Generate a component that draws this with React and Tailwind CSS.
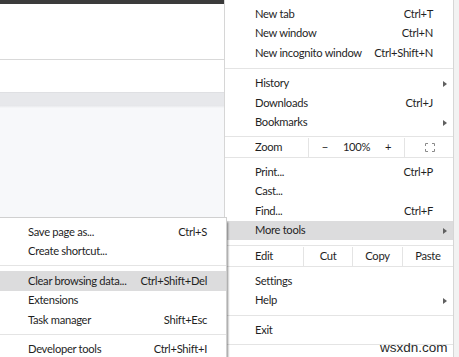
import React from "react";

const Arrow = () => (
  <span className="inline-block w-0 h-0 border-y-[3.5px] border-y-transparent border-l-[4px] border-l-[#606060]" />
);

const Item = ({ label, shortcut, arrow, active }) => (
  <div className={`flex items-center h-[19.5px] pt-[1px] pl-[30px] pr-[4px] whitespace-nowrap ${active ? "bg-[#dcdcdd]" : ""}`}>
    <span className="flex-1">{label}</span>
    {shortcut && <span className="mr-[8px]">{shortcut}</span>}
    <span className="w-[8px] flex justify-center">{arrow && <Arrow />}</span>
  </div>
);

const SubItem = ({ label, shortcut, active }) => (
  <div className={`flex items-center h-[19.5px] pt-[1px] pl-[28px] pr-[19px] whitespace-nowrap ${active ? "bg-[#dcdcdd]" : ""}`}>
    <span className="flex-1">{label}</span>
    {shortcut && <span>{shortcut}</span>}
  </div>
);

const Sep = ({ top = "mt-[5px]", bottom = "mb-[5px]" }) => (
  <div className={`h-px bg-[#e4e4e4] ${top} ${bottom}`} />
);

const FullscreenIcon = () => (
  <svg width="10" height="9" viewBox="0 0 10 9" fill="none" stroke="#8a8a8a" strokeWidth="1">
    <path d="M0.5 3V0.5H3M7 0.5H9.5V3M9.5 6V8.5H7M3 8.5H0.5V6" />
  </svg>
);

export default function App() {
  return (
    <div
      className="relative w-[459px] h-[357px] overflow-hidden flex text-[11.2px] tracking-[-0.3px] text-[#1f1f1f]"
      style={{ fontFamily: "Lato, 'Noto Sans', sans-serif" }}
    >
      {/* page behind the menus */}
      <div className="flex-1 flex flex-col">
        <div className="h-[4px] bg-[#3b3b3b]" />
        <div className="h-[55px] bg-white" />
        <div className="h-px bg-[#d9d9d9]" />
        <div className="h-[32px] bg-white" />
        <div className="h-px bg-[#dfe0e3]" />
        <div className="h-[12px] bg-[#e7e8eb]" />
        <div className="h-[3px] bg-gradient-to-b from-[#e3e4e7] to-[#f6f7f9]" />
        <div className="flex-1 bg-[#f7f8fa]" />
      </div>
      <div className="w-[6px] bg-[#f2f2f2]" />

      {/* main menu */}
      <div className="absolute left-[224px] top-0 w-[230px] h-[370px] bg-white border-x border-[#d6d6d6] pt-[4px]">
        <Item label="New tab" shortcut="Ctrl+T" />
        <Item label="New window" shortcut="Ctrl+N" />
        <Item label="New incognito window" shortcut="Ctrl+Shift+N" />
        <Sep />
        <Item label="History" arrow />
        <Item label="Downloads" shortcut="Ctrl+J" />
        <Item label="Bookmarks" arrow />
        <div className="mt-[4px] flex h-[21.5px] pt-[1px] border-y border-[#e4e4e4]">
          <div className="w-[83px] pl-[30px] flex items-center">Zoom</div>
          <div className="w-[96px] border-l border-[#e4e4e4] grid grid-cols-3 items-center text-center">
            <span>−</span>
            <span>100%</span>
            <span>+</span>
          </div>
          <div className="flex-1 border-l border-[#e4e4e4] flex items-center justify-center pl-[1px]">
            <FullscreenIcon />
          </div>
        </div>
        <div className="mt-[4.5px]">
          <Item label="Print..." shortcut="Ctrl+P" />
          <Item label="Cast..." />
          <Item label="Find..." shortcut="Ctrl+F" />
          <Item label="More tools" arrow active />
        </div>
        <div className="mt-[5px] flex h-[21.5px] pt-[1px] border-y border-[#e4e4e4]">
          <div className="w-[78px] pl-[30px] flex items-center">Edit</div>
          <div className="w-[49px] border-l border-[#e4e4e4] flex items-center justify-center">Cut</div>
          <div className="w-[50px] border-l border-[#e4e4e4] flex items-center justify-center">Copy</div>
          <div className="flex-1 border-l border-[#e4e4e4] flex items-center justify-center">Paste</div>
        </div>
        <div className="mt-[4.5px]">
          <Item label="Settings" />
          <Item label="Help" arrow />
        </div>
        <Sep top="mt-[4.5px]" bottom="mb-[5px]" />
        <Item label="Exit" />
        <Sep top="mt-[4px]" bottom="mb-[4px]" />
      </div>

      {/* more tools submenu */}
      <div className="absolute left-0 top-[217px] w-[227px] h-[150px] bg-white border-t border-r border-[#d0d0d0] pt-[4px] shadow-[2px_4px_2px_-1px_rgba(0,0,0,0.45)]">
        <SubItem label="Save page as..." shortcut="Ctrl+S" />
        <SubItem label="Create shortcut..." />
        <Sep top="mt-[4px]" bottom="mb-[5px]" />
        <SubItem label="Clear browsing data..." shortcut="Ctrl+Shift+Del" active />
        <SubItem label="Extensions" />
        <SubItem label="Task manager" shortcut="Shift+Esc" />
        <Sep top="mt-[4px]" bottom="mb-[4.5px]" />
        <SubItem label="Developer tools" shortcut="Ctrl+Shift+I" />
      </div>

      {/* watermark */}
      <div
        className="absolute left-[380px] top-[338px] text-[13.5px] tracking-normal text-[#2a2a2a]"
        style={{ fontFamily: "'Liberation Sans', Arial, sans-serif" }}
      >
        wsxdn.com
      </div>
    </div>
  );
}
